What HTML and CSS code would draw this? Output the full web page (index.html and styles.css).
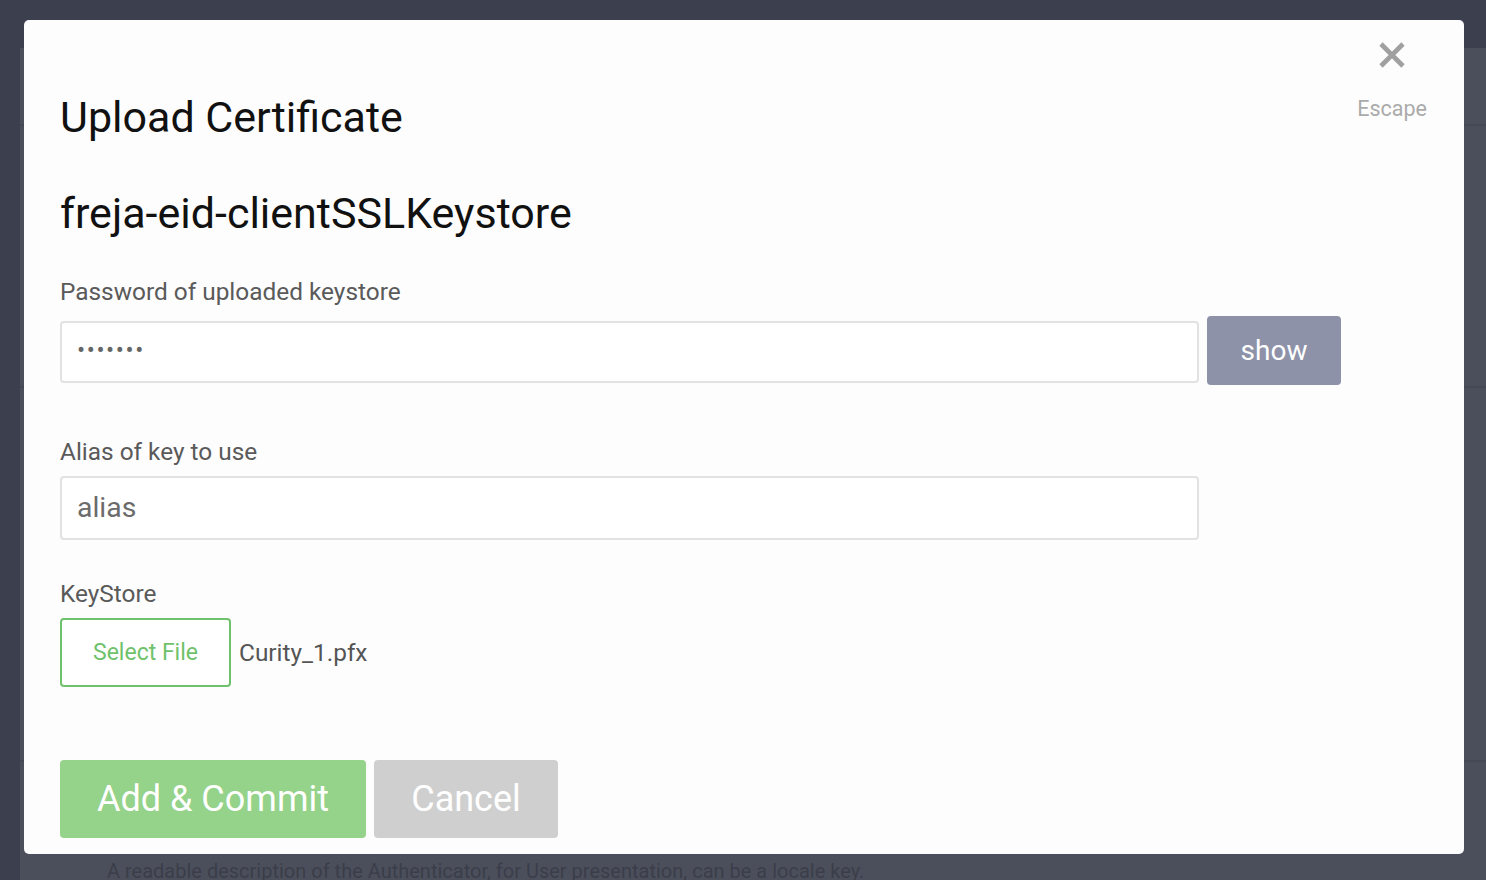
FILE: index.html
```html
<!DOCTYPE html>
<html>
<head>
<meta charset="utf-8">
<link rel="stylesheet" href="styles.css">
</head>
<body>
<div class="page">
  <div class="topbar"></div>
  <div class="main">
    <div class="side"></div>
    <div class="content">
      <div class="sec s1"></div>
      <div class="sec s2"></div>
      <div class="sec s3"></div>
      <div class="sec s4"><p class="desc">A readable description of the Authenticator, for User presentation, can be a locale key.</p></div>
    </div>
  </div>
</div>

<div class="modal">
  <div class="close">
    <svg class="close-x" width="26" height="26" viewBox="0 0 26 26"><path d="M2 2 L24 24 M24 2 L2 24" stroke="#a0a0a0" stroke-width="4.6" stroke-linecap="butt"/></svg>
    <span class="close-label">Escape</span>
  </div>
  <h1 class="title">Upload Certificate</h1>
  <h2 class="subtitle">freja-eid-clientSSLKeystore</h2>

  <div class="field">
    <label class="label">Password of uploaded keystore</label>
    <div class="row row-pw">
      <div class="input pw">•••••••</div>
      <button class="btn-show">show</button>
    </div>
  </div>

  <div class="field f2">
    <label class="label">Alias of key to use</label>
    <div class="row row-alias">
      <div class="input alias">alias</div>
    </div>
  </div>

  <div class="field f3">
    <label class="label">KeyStore</label>
    <div class="file-row">
      <button class="btn-file">Select File</button>
      <span class="filename">Curity_1.pfx</span>
    </div>
  </div>

  <div class="actions">
    <button class="btn-primary">Add &amp; Commit</button>
    <button class="btn-cancel">Cancel</button>
  </div>
</div>
</body>
</html>
```

FILE: styles.css
```css
* { box-sizing: border-box; }
html, body { margin: 0; padding: 0; }
body {
  width: 1486px;
  height: 880px;
  overflow: hidden;
  background: #3c3f4e;
  font-family: Roboto, "Liberation Sans", sans-serif;
}
.page { display: flex; flex-direction: column; height: 880px; overflow: hidden; }
.topbar { height: 48px; flex-shrink: 0; background: #3c3f4e; }
.main { flex: 1 1 0; min-height: 0; display: flex; }
.side { width: 20px; background: #3c3f4e; }
.content { flex: 1; display: flex; flex-direction: column; background: #4b4f5c; overflow: hidden; }
.sec { flex-shrink: 0; border-bottom: 2px solid #454955; }
.s1 { height: 78px; }
.s2 { height: 262px; }
.s3 { height: 374px; }
.s4 { flex: 1 1 0; min-height: 0; border-bottom: none; overflow: hidden; }
.desc {
  margin: 98px 0 0 87px;
  font-size: 20px;
  line-height: 23px;
  color: #3b3e49;
  white-space: nowrap;
}

.modal {
  position: absolute;
  left: 24px;
  top: 20px;
  width: 1440px;
  height: 834px;
  background: #fdfdfd;
  border-radius: 5px;
  padding: 0 36px;
}
.close {
  position: absolute;
  right: 37px;
  top: 22px;
  display: flex;
  flex-direction: column;
  align-items: center;
  gap: 28px;
}
.close-x { display: block; }
.close-label { font-size: 21.5px; line-height: 25px; color: #ababab; }

.title {
  margin: 0;
  padding-top: 72px;
  font-size: 43px;
  font-weight: 400;
  line-height: 50px;
  color: #111;
}
.subtitle {
  margin: 46px 0 0;
  font-size: 43px;
  font-weight: 400;
  line-height: 50px;
  color: #111;
}
.field { margin-top: 39px; }
.f2 { margin-top: 52px; }
.f3 { margin-top: 39px; }
.label {
  display: block;
  font-size: 24.4px;
  line-height: 30px;
  color: #5a5a5a;
}
.row { display: flex; align-items: center; gap: 8px; margin-top: 9px; }
.row-pw { align-items: flex-start; }
.row-alias { margin-top: 9px; }
.input {
  width: 1139px;
  border: 2px solid #e2e2e2;
  border-radius: 4px;
  background: #fff;
  padding: 0 15px;
  color: #666;
}
.pw { margin-top: 5px; height: 62px; line-height: 54px; font-size: 24px; letter-spacing: 1.6px; color: #666; }
.alias { height: 64px; line-height: 60px; font-size: 28.4px; color: #6b6b6b; }
.btn-show {
  width: 134px;
  height: 69px;
  border: none;
  border-radius: 4px;
  background: #8d92a8;
  color: #fff;
  font-family: inherit;
  font-size: 28px;
}
.file-row { display: flex; align-items: center; gap: 8px; margin-top: 9px; }
.btn-file {
  width: 171px;
  height: 69px;
  border: 2px solid #6fc26b;
  border-radius: 4px;
  background: #fff;
  color: #6fc26b;
  font-family: inherit;
  font-size: 23px;
}
.filename { font-size: 24.4px; color: #555; }
.actions { display: flex; gap: 8px; margin-top: 73px; }
.btn-primary, .btn-cancel {
  height: 78px;
  border: none;
  border-radius: 4px;
  color: #fff;
  font-family: inherit;
  font-size: 36px;
}
.btn-primary { width: 306px; background: #95d28a; }
.btn-cancel { width: 184px; background: #cfcfcf; }
```
